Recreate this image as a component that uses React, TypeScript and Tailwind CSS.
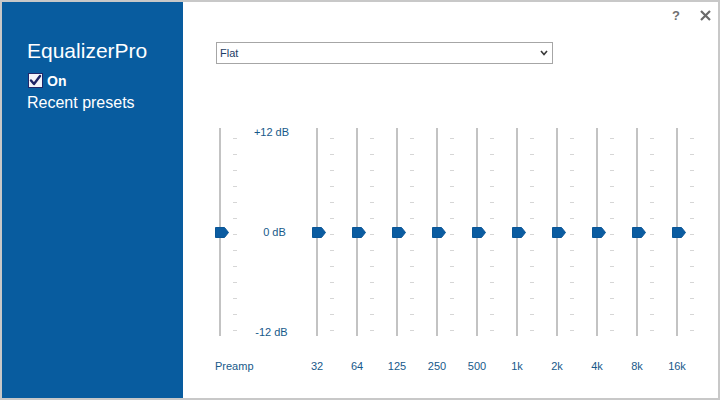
import React from "react";

const bands = ["32", "64", "125", "250", "500", "1k", "2k", "4k", "8k", "16k"];
const ticks = Array.from({ length: 13 }, (_, i) => i);

function Slider() {
  return (
    <div className="relative w-[40px] h-[208px] shrink-0">
      <div className="absolute left-[19px] top-0 w-[2px] h-[208px] bg-[#c3c3c3]" />
      {ticks.map((t) => (
        <div
          key={t}
          className="absolute left-[33px] w-[4px] h-[1px] bg-[#d6d6d6]"
          style={{ top: 10 + t * 16 }}
        />
      ))}
      <svg className="absolute left-[15px] top-[99px]" width="14" height="11" viewBox="0 0 14 11">
        <path d="M0.5 0.5 H9.5 L13.5 5.5 L9.5 10.5 H0.5 Z" fill="#0b5ca1" stroke="#0a5696" strokeWidth="1" strokeLinejoin="round" />
      </svg>
    </div>
  );
}

export default function App() {
  const font = { fontFamily: '"Liberation Sans", Arial, sans-serif' };
  return (
    <div
      className="w-[720px] h-[400px] border-2 border-[#c8c8c8] flex bg-white overflow-hidden"
      style={font}
    >
      <aside className="w-[181px] h-full bg-[#085c9f] text-white flex flex-col pl-[25px] pt-[37px] shrink-0">
        <div className="text-[21px] leading-[24px]">EqualizerPro</div>
        <div className="flex items-center mt-[10px] ml-[1px] h-[15px]">
          <svg width="15" height="15" viewBox="0 0 15 15">
            <rect x="0.5" y="0.5" width="14" height="14" fill="#f4f4fa" stroke="#22286a" />
            <path d="M3 7.5 L6 11 L12 3" fill="none" stroke="#1e2466" strokeWidth="2.4" strokeLinecap="round" strokeLinejoin="round" />
          </svg>
          <span className="ml-[4px] text-[14px] font-bold leading-[15px] mt-[1px]">On</span>
        </div>
        <div className="text-[16px] leading-[18px] mt-[6px]">Recent presets</div>
      </aside>

      <main className="flex-1 flex flex-col">
        <div className="h-[24px] flex items-start justify-end pt-[7px] pr-[7px] gap-[20px]">
          <span className="text-[13px] leading-[13px] font-bold text-[#707070]">?</span>
          <svg width="11" height="11" viewBox="0 0 11 11" className="mt-[1px]">
            <path d="M1 1 L10 10 M10 1 L1 10" stroke="#6a6a6a" strokeWidth="2.2" />
          </svg>
        </div>

        <div className="ml-[33px] mt-[16px] w-[337px] h-[22px] border border-[#a6a6a6] flex items-center justify-between pl-[3px] pr-[4px]">
          <span className="text-[11px] text-[#1d3d66]">Flat</span>
          <svg width="8" height="6" viewBox="0 0 8 6">
            <path d="M1 1 L4 4.5 L7 1" fill="none" stroke="#3a3a3a" strokeWidth="1.6" />
          </svg>
        </div>

        <div className="flex items-start ml-[17px] mt-[64px]">
          <Slider />
          <div className="w-[57px] h-[214px] -mt-[3px] flex flex-col justify-between items-center pl-[6px] text-[11px] leading-[14px] text-[#17598a]">
            <span>+12 dB</span>
            <span className="pl-[6px]">0 dB</span>
            <span>-12 dB</span>
          </div>
          {bands.map((b) => (
            <Slider key={b} />
          ))}
        </div>

        <div className="flex ml-[17px] mt-[20px] text-[11px] leading-[14px] text-[#17598a]">
          <div className="w-[97px] pl-[15px]">Preamp</div>
          {bands.map((b) => (
            <div key={b} className="w-[40px] text-center">
              {b}
            </div>
          ))}
        </div>
      </main>
    </div>
  );
}
